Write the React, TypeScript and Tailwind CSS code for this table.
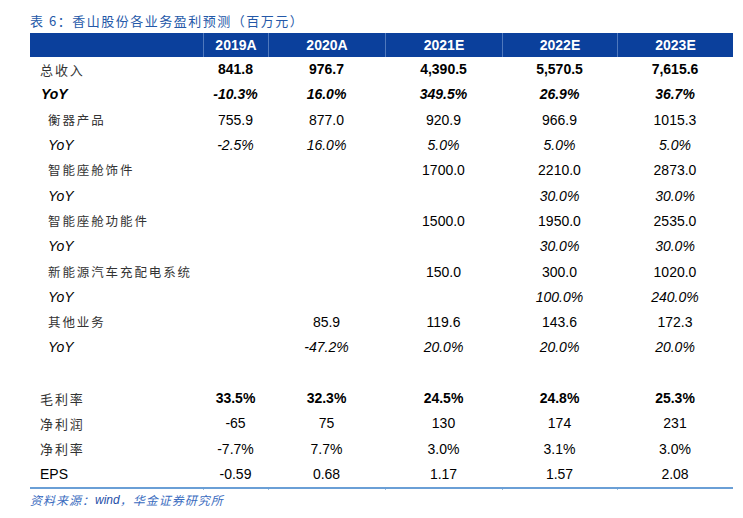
import React from 'react';

type Row = {
  label: string;
  values: string[];
  kind: 'total' | 'totalYoy' | 'sub' | 'subYoy' | 'blank' | 'main' | 'mainBold';
};

const rows: Row[] = [
  { label: '总收入', values: ['841.8', '976.7', '4,390.5', '5,570.5', '7,615.6'], kind: 'total' },
  { label: 'YoY', values: ['-10.3%', '16.0%', '349.5%', '26.9%', '36.7%'], kind: 'totalYoy' },
  { label: '衡器产品', values: ['755.9', '877.0', '920.9', '966.9', '1015.3'], kind: 'sub' },
  { label: 'YoY', values: ['-2.5%', '16.0%', '5.0%', '5.0%', '5.0%'], kind: 'subYoy' },
  { label: '智能座舱饰件', values: ['', '', '1700.0', '2210.0', '2873.0'], kind: 'sub' },
  { label: 'YoY', values: ['', '', '', '30.0%', '30.0%'], kind: 'subYoy' },
  { label: '智能座舱功能件', values: ['', '', '1500.0', '1950.0', '2535.0'], kind: 'sub' },
  { label: 'YoY', values: ['', '', '', '30.0%', '30.0%'], kind: 'subYoy' },
  { label: '新能源汽车充配电系统', values: ['', '', '150.0', '300.0', '1020.0'], kind: 'sub' },
  { label: 'YoY', values: ['', '', '', '100.0%', '240.0%'], kind: 'subYoy' },
  { label: '其他业务', values: ['', '85.9', '119.6', '143.6', '172.3'], kind: 'sub' },
  { label: 'YoY', values: ['', '-47.2%', '20.0%', '20.0%', '20.0%'], kind: 'subYoy' },
  { label: '', values: ['', '', '', '', ''], kind: 'blank' },
  { label: '毛利率', values: ['33.5%', '32.3%', '24.5%', '24.8%', '25.3%'], kind: 'mainBold' },
  { label: '净利润', values: ['-65', '75', '130', '174', '231'], kind: 'main' },
  { label: '净利率', values: ['-7.7%', '7.7%', '3.0%', '3.1%', '3.0%'], kind: 'main' },
  { label: 'EPS', values: ['-0.59', '0.68', '1.17', '1.57', '2.08'], kind: 'main' },
];

const years = ['2019A', '2020A', '2021E', '2022E', '2023E'];

const cols = 'grid grid-cols-[173px_65px_117px_117px_115px_116px]';
const num = "font-['Liberation_Sans',Arial,sans-serif] text-[14px]";
const cjk = "font-['Noto_Sans_CJK_SC',sans-serif] text-[12.5px] tracking-[1.9px] text-[#333]";

function labelCell(r: Row) {
  if (r.kind === 'blank') return <div />;
  if (r.kind === 'totalYoy')
    return <div className={`pl-[11px] ${num} font-bold italic text-black`}>{r.label}</div>;
  if (r.kind === 'subYoy')
    return <div className={`pl-[18px] ${num} italic text-black`}>{r.label}</div>;
  if (r.label === 'EPS') return <div className={`pl-[10px] ${num} text-black`}>{r.label}</div>;
  if (r.kind === 'sub') return <div className={`pl-[18px] ${cjk}`}>{r.label}</div>;
  return <div className={`pl-[10px] ${cjk} text-[13px]`}>{r.label}</div>;
}

function valueClass(kind: Row['kind']) {
  if (kind === 'total' || kind === 'mainBold') return 'font-bold';
  if (kind === 'totalYoy') return 'font-bold italic';
  if (kind === 'subYoy') return 'italic';
  return '';
}

export default function App() {
  return (
    <div className="w-[743px] h-[518px] bg-white pl-[30px] pt-[9px]">
      <div className="h-[24px] flex items-center font-['Noto_Sans_CJK_SC',sans-serif] text-[13px] tracking-[1.5px] text-[#2458a8]">
        表 6：香山股份各业务盈利预测（百万元）
      </div>
      <div className="w-[703px]">
        <div className={`${cols} h-[24px] bg-[#0b409c] text-white`}>
          <div />
          {years.map((y) => (
            <div key={y} className={`flex items-center justify-center border-l border-[#4f78bd] ${num} font-bold`}>
              {y}
            </div>
          ))}
        </div>
        {rows.map((r, i) => (
          <div key={i} className={`${cols} h-[25.3px] items-center`}>
            {labelCell(r)}
            {r.values.map((v, j) => (
              <div key={j} className={`text-center text-black ${num} ${valueClass(r.kind)}`}>
                {v}
              </div>
            ))}
          </div>
        ))}
        <div className={`${cols} h-[3px] border-t-2 border-[#6a9fd6]`}>
          <div />
          {years.map((y) => (
            <div key={y} className="border-l border-[#9dbfe3]" />
          ))}
        </div>
      </div>
      <div className="mt-[3px] h-[14px] flex items-center font-['Noto_Sans_CJK_SC',sans-serif] text-[12px] italic tracking-[1px] text-[#3a6cc0]">
        资料来源：<span className="font-['Liberation_Sans',Arial,sans-serif] tracking-normal text-[#1f4fa8]">wind</span>，华金证券研究所
      </div>
    </div>
  );
}
